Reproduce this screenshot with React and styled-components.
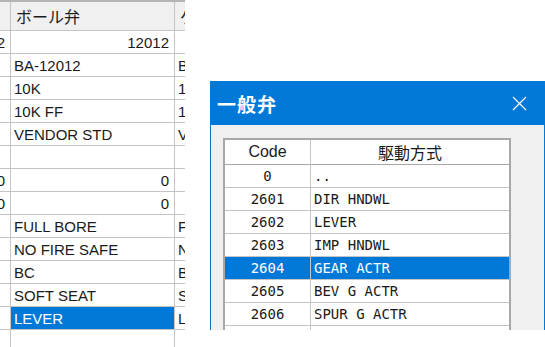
import React from 'react';
import styled, { createGlobalStyle } from 'styled-components';

const GlobalStyle = createGlobalStyle`
  html, body {
    margin: 0;
    padding: 0;
    background: #ffffff;
  }
  body {
    font-family: "Liberation Sans", "Noto Sans CJK JP", sans-serif;
    color: #1a1a1a;
  }
`;

const Page = styled.div`
  width: 545px;
  height: 347px;
  display: flex;
  align-items: flex-start;
  overflow: hidden;
`;

/* ---------- left property grid ---------- */

const SheetClip = styled.div`
  width: 185px;
  height: 347px;
  overflow: hidden;
  flex-shrink: 0;
`;

const Sheet = styled.div`
  width: 260px;
  display: grid;
  grid-template-columns: 11px 164px 85px;
  grid-template-rows: 29px;
  grid-auto-rows: 23px;
  border-top: 2px solid #b4b4b4;
`;

const SheetHead = styled.div`
  box-sizing: border-box;
  background: #f0f0f0;
  border-right: 1px solid #c4c4c4;
  border-bottom: 1px solid #c4c4c4;
  padding: 0 5px;
  display: flex;
  align-items: center;
  font-family: "Noto Sans CJK JP", sans-serif;
  font-size: 16px;
  white-space: nowrap;
  overflow: hidden;
  color: #1a1a1a;
`;

const SheetCell = styled.div`
  box-sizing: border-box;
  border-right: 1px solid #c4c4c4;
  border-bottom: 1px solid #c4c4c4;
  background: ${(p) => (p.$selected ? '#0078d7' : '#ffffff')};
  color: ${(p) => (p.$selected ? '#ffffff' : '#1a1a1a')};
  display: flex;
  align-items: center;
  justify-content: ${(p) => (p.$right ? 'flex-end' : 'flex-start')};
  padding: ${(p) => (p.$right ? '0 5px 0 0' : '0 0 0 3px')};
  font-size: 15px;
  white-space: nowrap;
  overflow: hidden;
`;

/* ---------- dialog ---------- */

const Dialog = styled.div`
  margin-left: 25px;
  margin-top: 81px;
  width: 335px;
  height: 249px;
  box-sizing: border-box;
  border-left: 1px solid #0078d7;
  border-right: 1px solid #0078d7;
  background: #f0f0f0;
  display: flex;
  flex-direction: column;
  overflow: hidden;
  flex-shrink: 0;
`;

const TitleBar = styled.div`
  height: 44px;
  flex-shrink: 0;
  background: #0078d7;
  color: #ffffff;
  display: flex;
  align-items: center;
  justify-content: space-between;
  padding: 0 17px 0 6px;
`;

const Title = styled.div`
  font-family: "Noto Sans CJK JP", sans-serif;
  font-weight: 700;
  font-size: 19px;
  letter-spacing: 1px;
`;

const CloseIcon = styled.svg`
  width: 15px;
  height: 15px;
  display: block;
`;

const DialogBody = styled.div`
  padding: 13px 0 0 12px;
`;

const Table = styled.div`
  width: 288px;
  box-sizing: border-box;
  border: 2px solid #a8a8a8;
  background: #ffffff;
  display: grid;
  grid-template-columns: 86px 198px;
  grid-template-rows: 25px;
  grid-auto-rows: 23px;
`;

const TableHead = styled.div`
  box-sizing: border-box;
  border-right: ${(p) => (p.$last ? 'none' : '1px solid #c4c4c4')};
  border-bottom: 1px solid #a8a8a8;
  display: flex;
  align-items: center;
  justify-content: center;
  font-family: "Liberation Sans", "Noto Sans CJK JP", sans-serif;
  font-size: 16px;
  color: #1a1a1a;
`;

const TableCell = styled.div`
  box-sizing: border-box;
  border-right: ${(p) => (p.$last ? 'none' : '1px solid #c4c4c4')};
  border-bottom: 1px solid #c4c4c4;
  background: ${(p) => (p.$selected ? '#0078d7' : '#ffffff')};
  color: ${(p) => (p.$selected ? '#ffffff' : '#1a1a1a')};
  display: flex;
  align-items: center;
  justify-content: ${(p) => (p.$center ? 'center' : 'flex-start')};
  padding-left: ${(p) => (p.$center ? '0' : '3px')};
  font-family: "DejaVu Sans Mono", monospace;
  font-size: 14px;
  white-space: nowrap;
  overflow: hidden;
`;

const sheetRows = [
  { a: '2', b: '12012', bRight: true, c: '' },
  { a: '', b: 'BA-12012', c: 'BA-12013' },
  { a: '', b: '10K', c: '10K' },
  { a: '', b: '10K FF', c: '10K FF' },
  { a: '', b: 'VENDOR STD', c: 'VENDOR STD' },
  { a: '', b: '', c: '' },
  { a: '0', b: '0', bRight: true, c: '' },
  { a: '0', b: '0', bRight: true, c: '' },
  { a: '', b: 'FULL BORE', c: 'FULL BORE' },
  { a: '', b: 'NO FIRE SAFE', c: 'NO FIRE SAFE' },
  { a: '', b: 'BC', c: 'BC' },
  { a: '', b: 'SOFT SEAT', c: 'SOFT SEAT' },
  { a: '', b: 'LEVER', c: 'LEVER', selected: true },
  { a: '', b: '', c: '' },
];

const codes = [
  ['0', '..'],
  ['2601', 'DIR HNDWL'],
  ['2602', 'LEVER'],
  ['2603', 'IMP HNDWL'],
  ['2604', 'GEAR ACTR'],
  ['2605', 'BEV G ACTR'],
  ['2606', 'SPUR G ACTR'],
  ['2607', 'CHAIN WHL'],
];

export default function App() {
  return (
    <Page>
      <GlobalStyle />
      <SheetClip>
        <Sheet>
          <SheetHead />
          <SheetHead>ボール弁</SheetHead>
          <SheetHead>ゲート弁</SheetHead>
          {sheetRows.map((r, i) => (
            <React.Fragment key={i}>
              <SheetCell $right>{r.a}</SheetCell>
              <SheetCell $right={r.bRight} $selected={r.selected}>{r.b}</SheetCell>
              <SheetCell>{r.c}</SheetCell>
            </React.Fragment>
          ))}
        </Sheet>
      </SheetClip>

      <Dialog>
        <TitleBar>
          <Title>一般弁</Title>
          <CloseIcon viewBox="0 0 15 15">
            <path d="M1 1 L14 14 M14 1 L1 14" stroke="#ffffff" strokeWidth="1.2" fill="none" />
          </CloseIcon>
        </TitleBar>
        <DialogBody>
          <Table>
            <TableHead>Code</TableHead>
            <TableHead $last>駆動方式</TableHead>
            {codes.map(([code, name]) => (
              <React.Fragment key={code}>
                <TableCell $center $selected={code === '2604'}>{code}</TableCell>
                <TableCell $last $selected={code === '2604'}>{name}</TableCell>
              </React.Fragment>
            ))}
          </Table>
        </DialogBody>
      </Dialog>
    </Page>
  );
}
